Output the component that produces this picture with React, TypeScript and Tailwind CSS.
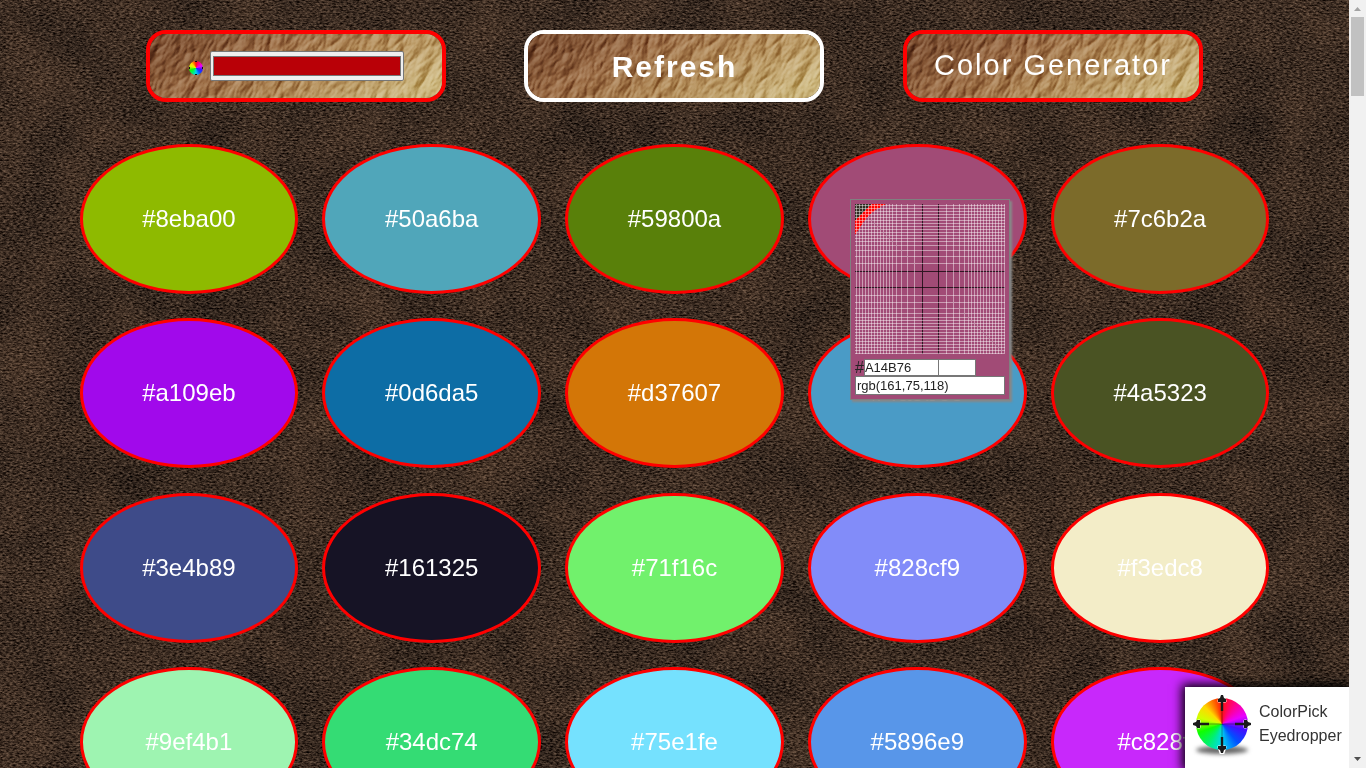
import React from "react";

const swatches = [
  "#8eba00", "#50a6ba", "#59800a", "#a14b76", "#7c6b2a",
  "#a109eb", "#0d6da5", "#d37607", "#4a9bc6", "#4a5323",
  "#3e4b89", "#161325", "#71f16c", "#828cf9", "#f3edc8",
  "#9ef4b1", "#34dc74", "#75e1fe", "#5896e9", "#c828fb",
];

function DarkLeather() {
  return (
    <svg className="absolute inset-0 h-full w-full" aria-hidden="true">
      <filter id="dark-leather" x="0" y="0" width="100%" height="100%" colorInterpolationFilters="sRGB">
        <feTurbulence type="fractalNoise" baseFrequency="0.3 0.6" numOctaves="3" seed="7" result="grain" />
        <feColorMatrix in="grain" type="matrix" values="0.6 0 0 0 -0.065  0.51 0 0 0 -0.08  0.43 0 0 0 -0.08  0 0 0 0 1" result="skin" />
        <feTurbulence type="fractalNoise" baseFrequency="0.018" numOctaves="2" seed="3" result="cloud" />
        <feColorMatrix in="cloud" type="matrix" values="0.14 0 0 0 0.43  0.1 0 0 0 0.45  0.07 0 0 0 0.465  0 0 0 0 1" result="shade" />
        <feComposite in="skin" in2="shade" operator="arithmetic" k1="0" k2="1" k3="1" k4="-0.5" />
      </filter>
      <rect width="100%" height="100%" filter="url(#dark-leather)" />
    </svg>
  );
}

function TanLeather({ id }: { id: string }) {
  return (
    <svg className="absolute inset-0 h-full w-full" viewBox="0 0 292 64" preserveAspectRatio="none" aria-hidden="true">
      <defs>
        <linearGradient id={id + "-tone"} x1="0" y1="0.3" x2="1" y2="0.7">
          <stop offset="0" stopColor="#7a4c2e" />
          <stop offset="0.3" stopColor="#996a43" />
          <stop offset="0.6" stopColor="#b08956" />
          <stop offset="1" stopColor="#cbb57c" />
        </linearGradient>
        <filter id={id + "-relief"} x="0" y="0" width="100%" height="100%" colorInterpolationFilters="sRGB">
          <feTurbulence type="turbulence" baseFrequency="0.06 0.03" numOctaves="4" seed="11" result="n" />
          <feDiffuseLighting in="n" surfaceScale="3" diffuseConstant="0.85" lightingColor="#ffffff">
            <feDistantLight azimuth="200" elevation="38" />
          </feDiffuseLighting>
        </filter>
      </defs>
      <rect width="292" height="64" fill={"url(#" + id + "-tone)"} />
      <g transform="rotate(28 146 32)" style={{ mixBlendMode: "soft-light" }}>
        <rect x="-20" y="-120" width="332" height="304" filter={"url(#" + id + "-relief)"} />
      </g>
    </svg>
  );
}

const wheel =
  "bg-[conic-gradient(#ff1010,#ff0090_35deg,#e800ff_70deg,#4010ff_105deg,#0050ff_140deg,#00d8f0_180deg,#00f070_215deg,#10ff00_250deg,#d0ff00_285deg,#ffd800_315deg,#ff5000_345deg,#ff1010)]";

// Grid line offsets from the canvas centre; spacing narrows toward the edge.
const lens = [8, 16, 23, 29, 34, 38, 41, 44, 47, 50, 53, 56, 59, 62, 65, 68, 71, 74];
const lines = lens.flatMap((d) => [75 - d, 75 + d]);

function Magnifier() {
  return (
    <svg className="block h-[150px] w-[150px]" viewBox="0 0 150 150" shapeRendering="crispEdges" aria-hidden="true">
      <rect width="150" height="150" fill="#a14b76" />
      <path d="M0 0H31L22 5L14 11L8 19L0 31Z" fill="#ff0000" />
      <path d="M0 0H17L12 4L8 8L0 17Z" fill="#302a20" />
      {lines.map((p) => (
        <path
          key={p}
          d={"M" + p + ".5 0V150M0 " + p + ".5H150"}
          stroke={p === 67 || p === 83 ? "#000000" : "#ffffff"}
          strokeOpacity={p === 67 || p === 83 ? 0.7 : 0.45}
        />
      ))}
    </svg>
  );
}

function PickerPopup() {
  return (
    <section
      aria-label="Color under cursor"
      className="absolute left-[850px] top-[199px] w-[160px] border border-[#808080] bg-[#a14b76] p-1 text-[13px] text-[#222] shadow-[2px_2px_2px_#888]"
    >
      <Magnifier />
      <label className="mt-[5px] flex h-[17px] items-center text-base leading-4">
        #
        <input aria-label="Hex value" readOnly value="A14B76" className="h-[17px] w-[75px] border border-[#777] bg-white text-[13px]" />
        <span className="h-[17px] w-[37px] border border-l-0 border-[#777] bg-white" />
      </label>
      <input aria-label="RGB value" readOnly value="rgb(161,75,118)" className="block h-[19px] w-full border border-[#777] bg-white px-px text-[13px]" />
    </section>
  );
}

function Arrow({ angle }: { angle: number }) {
  return (
    <g transform={"rotate(" + angle + " 30 30)"}>
      <path d="M29 1H31L33 7H27Z" fill="#111" stroke="#fff" strokeWidth="3" strokeLinejoin="round" />
      <path d="M29 1H31L32 4L34 5V8H31.200V17H28.800V8H26V5L28 4Z" fill="#1a1a1a" />
    </g>
  );
}

function ExtensionBadge() {
  return (
    <aside className="absolute bottom-0 right-0 flex h-[81px] w-[164px] bg-white pl-[7px] pt-[7px] shadow-[0_0_10px_3px_#000]">
      <div className="relative h-[60px] w-[60px]">
        <div className="absolute bottom-0 left-1 h-2 w-[52px] rounded-[50%] bg-[#666] blur-[2px]" />
        <div className={"absolute left-1 top-1 h-[52px] w-[52px] rounded-full " + wheel} />
        <svg className="absolute inset-0" width="60" height="60" viewBox="0 0 60 60" aria-hidden="true">
          <path d="M30 8V52M8 30H52" stroke="#111" strokeOpacity=".4" />
          {[0, 90, 180, 270].map((a) => <Arrow key={a} angle={a} />)}
        </svg>
      </div>
      <p className="pl-[7px] pt-[6px] text-base leading-6 text-[#333]">
        ColorPick
        <br />
        Eyedropper
      </p>
    </aside>
  );
}

const plate = "relative flex h-[72px] w-[300px] items-center justify-center overflow-hidden rounded-[20px] border-4 text-white";

export default function App() {
  return (
    <div className="flex h-screen overflow-hidden bg-[#32251b] font-['Liberation_Sans',Arial,sans-serif]">
      <main className="relative min-w-0 flex-1 overflow-hidden">
        <DarkLeather />
        <header className="relative mx-auto mt-[30px] flex w-9/10 justify-evenly">
          <div className={plate + " border-[#ff0000]"}>
            <TanLeather id="pick" />
            <label className="relative flex items-center gap-[7px] pl-0.5">
              <span className={"mt-1 h-[14px] w-[14px] rounded-full " + wheel}>
                <svg className="block" width="14" height="14" aria-hidden="true">
                  <path d="M7 0V1M7 13V14M0 7H1M13 7H14" stroke="#111" strokeWidth="2" />
                </svg>
              </span>
              <input
                type="color"
                aria-label="Base color"
                defaultValue="#b90007"
                className="h-[30px] w-[194px] appearance-none rounded-[2px] border border-[#767676] bg-[#efefef] px-0.5 py-1 [&::-webkit-color-swatch-wrapper]:p-0 [&::-webkit-color-swatch]:border-[#777]"
              />
            </label>
          </div>
          <button type="button" className={plate + " border-white text-[30px] font-bold tracking-[2px]"}>
            <TanLeather id="refresh" />
            <span className="relative">Refresh</span>
          </button>
          <button type="button" className={plate + " border-[#ff0000] text-[29px] tracking-[2px]"}>
            <TanLeather id="generator" />
            <span className="relative">Color Generator</span>
          </button>
        </header>
        <ul className="relative mx-auto mt-[30px] grid w-9/10 grid-cols-5">
          {swatches.map((c) => (
            <li key={c} className="p-[5%]">
              <button type="button" style={{ backgroundColor: c }} className="h-[150px] w-full rounded-[50%] border-3 border-[#ff0000] text-2xl text-white">
                {c}
              </button>
            </li>
          ))}
        </ul>
        <PickerPopup />
        <ExtensionBadge />
      </main>
      <div className="flex w-[17px] flex-col items-center justify-between bg-[#f1f1f1]" aria-hidden="true">
        <div className="flex flex-col items-center">
          <svg width="17" height="17"><path d="M5 11L8.500 7L12 11Z" fill="#a3a3a3" /></svg>
          <div className="h-[79px] w-[13px] bg-[#c1c1c1]" />
        </div>
        <svg width="17" height="17"><path d="M5 6L8.500 10L12 6Z" fill="#505050" /></svg>
      </div>
    </div>
  );
}
